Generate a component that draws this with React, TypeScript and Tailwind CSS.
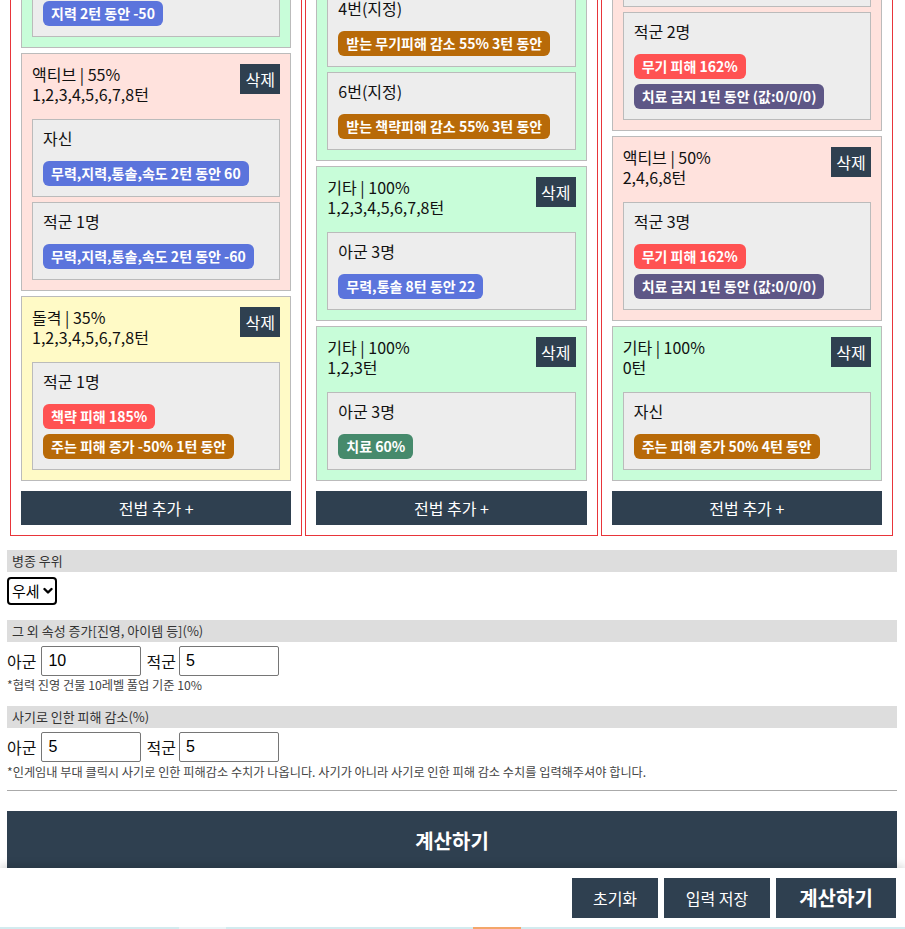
import React from "react";

type Tone = "blue" | "red" | "orange" | "green" | "purple";
type Badge = { t: string; c: Tone };
type Inner = { title: string; badges: Badge[] };
type Card = { bg: "green" | "pink" | "yellow"; head: string; turns: string; inners: Inner[] };

const toneCls: Record<Tone, string> = {
  blue: "bg-[#5b74dc]",
  red: "bg-[#ff5252]",
  orange: "bg-[#b86a08]",
  green: "bg-[#468a6c]",
  purple: "bg-[#5e5786]",
};

const cardCls: Record<Card["bg"], string> = {
  green: "bg-[#c8fdd9]",
  pink: "bg-[#ffe2dd]",
  yellow: "bg-[#fffac6]",
};

const columns: Card[][] = [
  [
    {
      bg: "green",
      head: "기타 | 100%",
      turns: "1,2턴",
      inners: [
        { title: "자신", badges: [{ t: "통솔 2턴 동안 50", c: "blue" }, { t: "무력 2턴 동안 50", c: "blue" }] },
        { title: "적군 1명", badges: [{ t: "지력 2턴 동안 -50", c: "blue" }] },
      ],
    },
    {
      bg: "pink",
      head: "액티브 | 55%",
      turns: "1,2,3,4,5,6,7,8턴",
      inners: [
        { title: "자신", badges: [{ t: "무력,지력,통솔,속도 2턴 동안 60", c: "blue" }] },
        { title: "적군 1명", badges: [{ t: "무력,지력,통솔,속도 2턴 동안 -60", c: "blue" }] },
      ],
    },
    {
      bg: "yellow",
      head: "돌격 | 35%",
      turns: "1,2,3,4,5,6,7,8턴",
      inners: [
        {
          title: "적군 1명",
          badges: [
            { t: "책략 피해 185%", c: "red" },
            { t: "주는 피해 증가 -50% 1턴 동안", c: "orange" },
          ],
        },
      ],
    },
  ],
  [
    {
      bg: "green",
      head: "기타 | 100%",
      turns: "0턴",
      inners: [
        {
          title: "2번(지정)",
          badges: [
            { t: "받는 무기피해 감소 55% 3턴 동안", c: "orange" },
            { t: "받는 책략피해 감소 55% 3턴 동안", c: "orange" },
            { t: "받는 피해 감소 55% 3턴 동안", c: "orange" },
          ],
        },
        { title: "4번(지정)", badges: [{ t: "받는 무기피해 감소 55% 3턴 동안", c: "orange" }] },
        { title: "6번(지정)", badges: [{ t: "받는 책략피해 감소 55% 3턴 동안", c: "orange" }] },
      ],
    },
    {
      bg: "green",
      head: "기타 | 100%",
      turns: "1,2,3,4,5,6,7,8턴",
      inners: [{ title: "아군 3명", badges: [{ t: "무력,통솔 8턴 동안 22", c: "blue" }] }],
    },
    {
      bg: "green",
      head: "기타 | 100%",
      turns: "1,2,3턴",
      inners: [{ title: "아군 3명", badges: [{ t: "치료 60%", c: "green" }] }],
    },
  ],
  [
    {
      bg: "pink",
      head: "액티브 | 50%",
      turns: "1,3,5,7턴",
      inners: [
        { title: "적군 1명", badges: [{ t: "무기 피해 162%", c: "red" }] },
        { title: "적군 1명", badges: [{ t: "치료 금지 1턴 동안 (값:0/0/0)", c: "purple" }] },
        {
          title: "적군 2명",
          badges: [
            { t: "무기 피해 162%", c: "red" },
            { t: "치료 금지 1턴 동안 (값:0/0/0)", c: "purple" },
          ],
        },
      ],
    },
    {
      bg: "pink",
      head: "액티브 | 50%",
      turns: "2,4,6,8턴",
      inners: [
        {
          title: "적군 3명",
          badges: [
            { t: "무기 피해 162%", c: "red" },
            { t: "치료 금지 1턴 동안 (값:0/0/0)", c: "purple" },
          ],
        },
      ],
    },
    {
      bg: "green",
      head: "기타 | 100%",
      turns: "0턴",
      inners: [{ title: "자신", badges: [{ t: "주는 피해 증가 50% 4턴 동안", c: "orange" }] }],
    },
  ],
];

function CardView({ card }: { card: Card }) {
  return (
    <div className={`border border-[#bbbbbb] p-[10px] ${cardCls[card.bg]}`}>
      <div className="flex items-start justify-between">
        <div className="text-[16px] leading-[20px] text-[#111]">
          <div>{card.head}</div>
          <div>{card.turns}</div>
        </div>
        <button className="h-[30px] w-[40px] bg-[#2f4050] text-[16px] leading-[30px] text-white">삭제</button>
      </div>
      <div className="mt-[15px] flex flex-col gap-[5px]">
        {card.inners.map((inn, i) => (
          <div key={i} className="border border-[#bbbbbb] bg-[#ededed] p-[10px]">
            <div className="mb-[15px] text-[16px] leading-[16px] text-[#111]">{inn.title}</div>
            <div className="flex flex-col items-start gap-[5px]">
              {inn.badges.map((b, j) => (
                <span
                  key={j}
                  className={`h-[25px] rounded-[6px] px-[8px] text-[14px] font-bold leading-[25px] text-white ${toneCls[b.c]}`}
                >
                  {b.t}
                </span>
              ))}
            </div>
          </div>
        ))}
      </div>
    </div>
  );
}

function SectionBar({ children }: { children: React.ReactNode }) {
  return <div className="h-[22px] bg-[#dddddd] px-[5px] text-[13px] leading-[22px] text-[#333]">{children}</div>;
}

function PairInputs({ a, b }: { a: string; b: string }) {
  return (
    <div className="mt-[4px] flex h-[30px] items-center text-[16px] text-[#111]">
      <span>아군</span>
      <input
        defaultValue={a}
        className="ml-[5px] h-[30px] w-[100px] rounded-[2px] border border-[#767676] bg-white px-[6px] font-['Liberation_Sans',sans-serif] text-[16px] text-black"
      />
      <span className="ml-[5px]">적군</span>
      <input
        defaultValue={b}
        className="ml-[3px] h-[30px] w-[100px] rounded-[2px] border border-[#767676] bg-white px-[6px] font-['Liberation_Sans',sans-serif] text-[16px] text-black"
      />
    </div>
  );
}

export default function App() {
  return (
    <div className="-mt-[231px] bg-white pl-[7px] pr-[8px] font-['Noto_Sans_CJK_KR','Noto_Sans',sans-serif] text-[#111]">
      <div className="ml-[3px] mr-[4px] grid grid-cols-3 gap-[3px]">
        {columns.map((col, ci) => (
          <div key={ci} className="flex flex-col border border-[#e8353a] p-[10px]">
            <div className="flex flex-col gap-[5px]">
              {col.map((c, i) => (
                <CardView key={i} card={c} />
              ))}
            </div>
            <button className="mt-[10px] h-[34px] w-full bg-[#2f4050] text-[16px] text-white">전법 추가 +</button>
          </div>
        ))}
      </div>

      <div className="mt-[14px]">
        <SectionBar>병종 우위</SectionBar>
        <div className="relative mt-[5px] h-[28px] w-[50px]">
          <select
            defaultValue="우세"
            className="h-full w-full appearance-none rounded-[4px] border-2 border-black bg-white pl-[3px] text-[15px] leading-[24px] text-black"
          >
            <option>우세</option>
            <option>열세</option>
            <option>없음</option>
          </select>
          <svg
            className="pointer-events-none absolute right-[4px] top-[10px]"
            width="10"
            height="8"
            viewBox="0 0 10 8"
            fill="none"
          >
            <path d="M1.5 2 L5 5.5 L8.5 2" stroke="#000" strokeWidth="2.4" strokeLinecap="round" strokeLinejoin="round" />
          </svg>
        </div>
      </div>

      <div className="mt-[15px]">
        <SectionBar>그 외 속성 증가[진영, 아이템 등](%)</SectionBar>
        <PairInputs a="10" b="5" />
        <div className="text-[12.2px] leading-[18px] text-[#444]">*협력 진영 건물 10레벨 풀업 기준 10%</div>
      </div>

      <div className="mt-[12px]">
        <SectionBar>사기로 인한 피해 감소(%)</SectionBar>
        <PairInputs a="5" b="5" />
        <div className="mt-[1px] text-[12.2px] leading-[18px] text-[#444]">
          *인게임내 부대 클릭시 사기로 인한 피해감소 수치가 나옵니다. 사기가 아니라 사기로 인한 피해 감소 수치를 입력해주셔야 합니다.
        </div>
      </div>

      <div className="mt-[9px] h-px bg-[#aaaaaa]" />

      <button className="mt-[20px] h-[60px] w-full bg-[#2f4050] text-[20px] font-bold text-white">계산하기</button>

      <div className="fixed bottom-0 left-0 right-0 flex h-[61px] flex-col bg-white shadow-[0_-3px_8px_rgba(0,0,0,0.15)]">
        <div className="flex justify-end gap-[6px] pr-[9px] pt-[10px]">
          <button className="h-[40px] w-[86px] bg-[#2f4050] text-[16px] text-white">초기화</button>
          <button className="h-[40px] w-[106px] bg-[#2f4050] text-[16px] text-white">입력 저장</button>
          <button className="h-[40px] w-[120px] bg-[#2f4050] text-[20px] font-bold text-white">계산하기</button>
        </div>
        <div className="mt-auto flex h-[2px]">
          <div className="w-[179px] bg-[#d3ebef]" />
          <div className="w-[47px] bg-[#eaf5f7]" />
          <div className="w-[247px] bg-[#d3ebef]" />
          <div className="w-[48px] bg-[#f4a66a]" />
          <div className="flex-1 bg-[#d3ebef]" />
        </div>
      </div>
    </div>
  );
}
